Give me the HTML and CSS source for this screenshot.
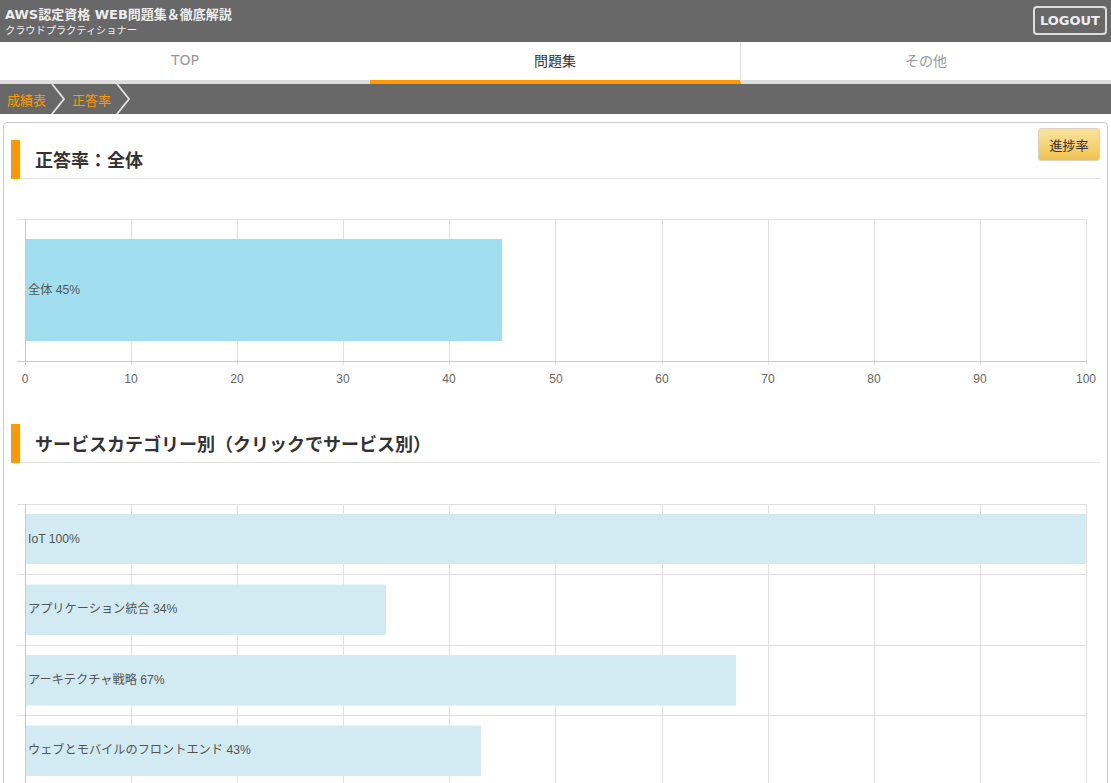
FILE: index.html
```html
<!DOCTYPE html>
<html lang="ja">
<head>
<meta charset="utf-8">
<title>正答率</title>
<link rel="stylesheet" href="styles.css">
</head>
<body>
<header class="topbar">
  <div class="brand">
    <div class="brand-title">AWS認定資格 WEB問題集＆徹底解説</div>
    <div class="brand-sub">クラウドプラクティショナー</div>
  </div>
  <a class="logout">LOGOUT</a>
</header>
<nav class="tabs">
  <a class="tab">TOP</a>
  <a class="tab tab-active">問題集</a>
  <a class="tab">その他</a>
</nav>
<div class="crumbs">
  <a class="crumb">成績表<svg class="chev" width="14" height="30" viewBox="0 0 14 30"><polyline points="1,0 13,15 1,30"/></svg></a>
  <a class="crumb">正答率<svg class="chev" width="14" height="30" viewBox="0 0 14 30"><polyline points="1,0 13,15 1,30"/></svg></a>
</div>
<main class="panel">
  <button class="progress-btn">進捗率</button>
  <h2 class="heading"><span class="heading-bar"></span>正答率：全体</h2>
  <svg class="chart" width="1089" height="245" viewBox="0 0 1089 245">
    <line class="grid" x1="6" y1="40.5" x2="1075" y2="40.5"/>
    <g class="grid">
      <line x1="120.5" y1="40" x2="120.5" y2="186"/>
      <line x1="226.5" y1="40" x2="226.5" y2="186"/>
      <line x1="332.5" y1="40" x2="332.5" y2="186"/>
      <line x1="438.5" y1="40" x2="438.5" y2="186"/>
      <line x1="544.5" y1="40" x2="544.5" y2="186"/>
      <line x1="651.5" y1="40" x2="651.5" y2="186"/>
      <line x1="757.5" y1="40" x2="757.5" y2="186"/>
      <line x1="863.5" y1="40" x2="863.5" y2="186"/>
      <line x1="969.5" y1="40" x2="969.5" y2="186"/>
      <line x1="1075.5" y1="40" x2="1075.5" y2="186"/>
    </g>
    <rect class="bar-main" x="14" y="60" width="477" height="102"/>
    <text class="bar-label" x="17" y="115">全体 45%</text>
    <line class="axis" x1="14.5" y1="40" x2="14.5" y2="186"/>
    <line class="axis" x1="6" y1="182.5" x2="1076" y2="182.5"/>
    <g class="tick-label">
      <text x="14" y="204">0</text>
      <text x="120" y="204">10</text>
      <text x="226" y="204">20</text>
      <text x="332" y="204">30</text>
      <text x="438" y="204">40</text>
      <text x="545" y="204">50</text>
      <text x="651" y="204">60</text>
      <text x="757" y="204">70</text>
      <text x="863" y="204">80</text>
      <text x="969" y="204">90</text>
      <text x="1075" y="204">100</text>
    </g>
  </svg>
  <h2 class="heading"><span class="heading-bar"></span>サービスカテゴリー別（クリックでサービス別）</h2>
  <svg class="chart" width="1089" height="320" viewBox="0 0 1089 320">
    <g class="grid">
      <line x1="6" y1="41.5" x2="1075" y2="41.5"/>
      <line x1="6" y1="111.5" x2="1075" y2="111.5"/>
      <line x1="6" y1="182.5" x2="1075" y2="182.5"/>
      <line x1="6" y1="252.5" x2="1075" y2="252.5"/>
      <line x1="120.5" y1="41" x2="120.5" y2="320"/>
      <line x1="226.5" y1="41" x2="226.5" y2="320"/>
      <line x1="332.5" y1="41" x2="332.5" y2="320"/>
      <line x1="438.5" y1="41" x2="438.5" y2="320"/>
      <line x1="544.5" y1="41" x2="544.5" y2="320"/>
      <line x1="651.5" y1="41" x2="651.5" y2="320"/>
      <line x1="757.5" y1="41" x2="757.5" y2="320"/>
      <line x1="863.5" y1="41" x2="863.5" y2="320"/>
      <line x1="969.5" y1="41" x2="969.5" y2="320"/>
      <line x1="1075.5" y1="41" x2="1075.5" y2="320"/>
    </g>
    <rect class="bar-cat" x="14" y="51" width="1061" height="50"/>
    <text class="bar-label" x="17" y="80">IoT 100%</text>
    <rect class="bar-cat" x="14" y="121.5" width="361" height="50.5"/>
    <text class="bar-label" x="17" y="150">アプリケーション統合 34%</text>
    <rect class="bar-cat" x="14" y="192" width="711" height="50.5"/>
    <text class="bar-label" x="17" y="221">アーキテクチャ戦略 67%</text>
    <rect class="bar-cat" x="14" y="262.5" width="456" height="50.5"/>
    <text class="bar-label" x="17" y="291">ウェブとモバイルのフロントエンド 43%</text>
    <line class="axis" x1="14.5" y1="41" x2="14.5" y2="320"/>
  </svg>
</main>
</body>
</html>
```
FILE: styles.css
```css
html, body {
  margin: 0;
  padding: 0;
}
body {
  height: 783px;
  overflow: hidden;
  background: #fff;
  font-family: "DejaVu Sans", "Noto Sans CJK JP", sans-serif;
  color: #333;
}
.topbar {
  height: 42px;
  background: #686868;
  display: flex;
  justify-content: space-between;
  align-items: flex-start;
  padding: 0 4px 0 5px;
  box-sizing: border-box;
}
.brand {
  padding-top: 6px;
  color: #eee;
}
.brand-title {
  font-size: 13px;
  font-weight: bold;
  line-height: 17px;
}
.brand-sub {
  font-size: 10.2px;
  line-height: 13px;
  font-family: "Noto Sans CJK JP", sans-serif;
}
.logout {
  margin-top: 6px;
  height: 29px;
  box-sizing: border-box;
  border: 2px solid #ddd;
  border-radius: 4px;
  color: #eee;
  font-size: 13px;
  font-weight: bold;
  line-height: 25px;
  padding: 0 5px;
}
.tabs {
  display: flex;
  height: 42px;
}
.tab {
  flex: 1;
  height: 38px;
  box-sizing: border-box;
  padding-bottom: 3px;
  border-bottom: 4px solid #dedede;
  display: flex;
  align-items: center;
  justify-content: center;
  font-size: 14px;
  color: #999;
  font-family: "DejaVu Sans", "Noto Sans CJK JP", sans-serif;
}
.tabs .tab {
  height: 42px;
}
.tab-active {
  color: #333;
  border-bottom-color: #ff9900;
  border-right: 1px solid #dedede;
  font-family: "Noto Sans CJK JP", sans-serif;
}
.crumbs {
  height: 30px;
  background: #686868;
  display: flex;
  padding-left: 7px;
}
.crumb {
  display: flex;
  align-items: center;
  color: #ff9900;
  font-size: 13px;
  font-family: "Noto Sans CJK JP", sans-serif;
}
.chev {
  margin: 0 7px 0 5px;
}
.chev polyline {
  fill: none;
  stroke: #e2e2e2;
  stroke-width: 1.8;
}
.panel {
  position: relative;
  margin: 8px 3px 0 3px;
  border: 1px solid #ccc;
  border-radius: 4px;
  padding: 17px 7px 0 7px;
  height: 700px;
  box-sizing: border-box;
}
.progress-btn {
  position: absolute;
  top: 5px;
  right: 7px;
  width: 62px;
  height: 33px;
  border: 1px solid #dcd3bb;
  border-radius: 3px;
  background: linear-gradient(#fbe39e, #f1c24f);
  font-family: "Noto Sans CJK JP", sans-serif;
  font-size: 13px;
  color: #333;
  padding: 0;
}
.heading {
  margin: 0;
  height: 38px;
  border-bottom: 1px solid #e2e2e2;
  display: flex;
  align-items: center;
  font-size: 18px;
  font-weight: bold;
  color: #333;
  font-family: "Noto Sans CJK JP", sans-serif;
}
.heading-bar {
  width: 9px;
  align-self: stretch;
  background: #ff9900;
  margin-right: 15px;
  margin-bottom: -1px;
}
.chart {
  display: block;
}
.grid, .grid line {
  stroke: #e0e0e0;
  stroke-width: 1;
}
.axis {
  stroke: #c8c8c8;
  stroke-width: 1;
}
.bar-main {
  fill: #a1dff0;
}
.bar-cat {
  fill: #d2ebf2;
}
.bar-label {
  font-family: "Liberation Sans", "Noto Sans CJK JP", sans-serif;
  font-size: 12.2px;
  fill: #555;
}
.tick-label text {
  font-family: "Liberation Sans", sans-serif;
  font-size: 12px;
  fill: #666;
  text-anchor: middle;
}
```
